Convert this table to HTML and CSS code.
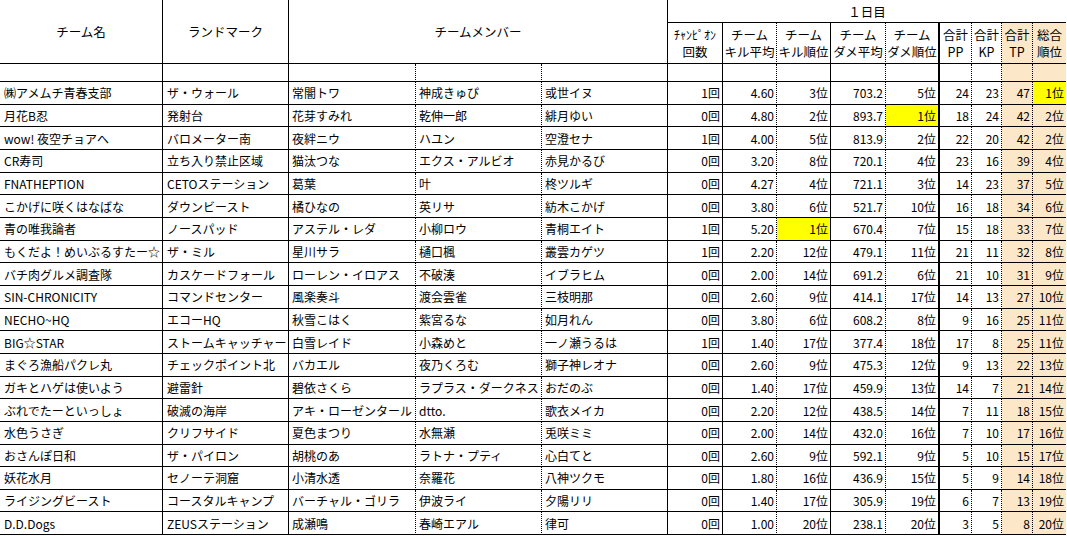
FILE: index.html
```html
<!DOCTYPE html>
<html lang="ja">
<head>
<meta charset="utf-8">
<title>1日目 結果</title>
<link rel="stylesheet" href="styles.css">
</head>
<body>
<div class="sheet">
  <div class="hd hd-team">チーム名</div>
  <div class="hd hd-land">ランドマーク</div>
  <div class="hd hd-member">チームメンバー</div>
  <div class="hd hd-day">１日目</div>

  <div class="sub">
    <div><span class="champ">ﾁｬﾝﾋﾟｵﾝ</span><span>回数</span></div>
    <div><span>チーム</span><span>キル平均</span></div>
    <div><span>チーム</span><span>キル順位</span></div>
    <div><span>チーム</span><span>ダメ平均</span></div>
    <div><span>チーム</span><span>ダメ順位</span></div>
    <div><span>合計</span><span>PP</span></div>
    <div><span>合計</span><span>KP</span></div>
    <div><span>合計</span><span>TP</span></div>
    <div><span>総合</span><span>順位</span></div>
  </div>

  <div class="row"><div></div><div></div><div></div><div></div><div></div><div></div><div></div><div></div><div></div><div></div><div></div><div></div><div></div><div></div></div>

  <div class="row"><div>㈱アメムチ青春支部</div><div>ザ・ウォール</div><div>常闇トワ</div><div>神成きゅぴ</div><div>或世イヌ</div><div>1回</div><div>4.60</div><div>3位</div><div>703.2</div><div>5位</div><div>24</div><div>23</div><div>47</div><div class="hl">1位</div></div>
  <div class="row"><div>月花B忍</div><div>発射台</div><div>花芽すみれ</div><div>乾伸一郎</div><div>緋月ゆい</div><div>0回</div><div>4.80</div><div>2位</div><div>893.7</div><div class="hl">1位</div><div>18</div><div>24</div><div>42</div><div>2位</div></div>
  <div class="row"><div>wow! 夜空チョアへ</div><div>バロメーター南</div><div>夜絆ニウ</div><div>ハユン</div><div>空澄セナ</div><div>1回</div><div>4.00</div><div>5位</div><div>813.9</div><div>2位</div><div>22</div><div>20</div><div>42</div><div>2位</div></div>
  <div class="row"><div>CR寿司</div><div>立ち入り禁止区域</div><div>猫汰つな</div><div>エクス・アルビオ</div><div>赤見かるび</div><div>0回</div><div>3.20</div><div>8位</div><div>720.1</div><div>4位</div><div>23</div><div>16</div><div>39</div><div>4位</div></div>
  <div class="row"><div>FNATHEPTION</div><div>CETOステーション</div><div>葛葉</div><div>叶</div><div>柊ツルギ</div><div>0回</div><div>4.27</div><div>4位</div><div>721.1</div><div>3位</div><div>14</div><div>23</div><div>37</div><div>5位</div></div>
  <div class="row"><div>こかげに咲くはなばな</div><div>ダウンビースト</div><div>橘ひなの</div><div>英リサ</div><div>紡木こかげ</div><div>0回</div><div>3.80</div><div>6位</div><div>521.7</div><div>10位</div><div>16</div><div>18</div><div>34</div><div>6位</div></div>
  <div class="row"><div>青の唯我論者</div><div>ノースパッド</div><div>アステル・レダ</div><div>小柳ロウ</div><div>青桐エイト</div><div>1回</div><div>5.20</div><div class="hl">1位</div><div>670.4</div><div>7位</div><div>15</div><div>18</div><div>33</div><div>7位</div></div>
  <div class="row"><div>もくだよ！めいぶるすたー☆</div><div>ザ・ミル</div><div>星川サラ</div><div>樋口楓</div><div>叢雲カゲツ</div><div>1回</div><div>2.20</div><div>12位</div><div>479.1</div><div>11位</div><div>21</div><div>11</div><div>32</div><div>8位</div></div>
  <div class="row"><div>バチ肉グルメ調査隊</div><div>カスケードフォール</div><div>ローレン・イロアス</div><div>不破湊</div><div>イブラヒム</div><div>0回</div><div>2.00</div><div>14位</div><div>691.2</div><div>6位</div><div>21</div><div>10</div><div>31</div><div>9位</div></div>
  <div class="row"><div>SIN-CHRONICITY</div><div>コマンドセンター</div><div>風楽奏斗</div><div>渡会雲雀</div><div>三枝明那</div><div>0回</div><div>2.60</div><div>9位</div><div>414.1</div><div>17位</div><div>14</div><div>13</div><div>27</div><div>10位</div></div>
  <div class="row"><div>NECHO~HQ</div><div>エコーHQ</div><div>秋雪こはく</div><div>紫宮るな</div><div>如月れん</div><div>0回</div><div>3.80</div><div>6位</div><div>608.2</div><div>8位</div><div>9</div><div>16</div><div>25</div><div>11位</div></div>
  <div class="row"><div>BIG☆STAR</div><div>ストームキャッチャー</div><div>白雪レイド</div><div>小森めと</div><div>一ノ瀬うるは</div><div>1回</div><div>1.40</div><div>17位</div><div>377.4</div><div>18位</div><div>17</div><div>8</div><div>25</div><div>11位</div></div>
  <div class="row"><div>まぐろ漁船パクレ丸</div><div>チェックポイント北</div><div>バカエル</div><div>夜乃くろむ</div><div>獅子神レオナ</div><div>0回</div><div>2.60</div><div>9位</div><div>475.3</div><div>12位</div><div>9</div><div>13</div><div>22</div><div>13位</div></div>
  <div class="row"><div>ガキとハゲは使いよう</div><div>避雷針</div><div>碧依さくら</div><div>ラプラス・ダークネス</div><div>おだのぶ</div><div>0回</div><div>1.40</div><div>17位</div><div>459.9</div><div>13位</div><div>14</div><div>7</div><div>21</div><div>14位</div></div>
  <div class="row"><div>ぶれでたーといっしょ</div><div>破滅の海岸</div><div>アキ・ローゼンタール</div><div>dtto.</div><div>歌衣メイカ</div><div>0回</div><div>2.20</div><div>12位</div><div>438.5</div><div>14位</div><div>7</div><div>11</div><div>18</div><div>15位</div></div>
  <div class="row"><div>水色うさぎ</div><div>クリフサイド</div><div>夏色まつり</div><div>水無瀬</div><div>兎咲ミミ</div><div>0回</div><div>2.00</div><div>14位</div><div>432.0</div><div>16位</div><div>7</div><div>10</div><div>17</div><div>16位</div></div>
  <div class="row"><div>おさんぽ日和</div><div>ザ・パイロン</div><div>胡桃のあ</div><div>ラトナ・プティ</div><div>心白てと</div><div>0回</div><div>2.60</div><div>9位</div><div>592.1</div><div>9位</div><div>5</div><div>10</div><div>15</div><div>17位</div></div>
  <div class="row"><div>妖花水月</div><div>セノーテ洞窟</div><div>小清水透</div><div>奈羅花</div><div>八神ツクモ</div><div>0回</div><div>1.80</div><div>16位</div><div>436.9</div><div>15位</div><div>5</div><div>9</div><div>14</div><div>18位</div></div>
  <div class="row"><div>ライジングビースト</div><div>コースタルキャンプ</div><div>バーチャル・ゴリラ</div><div>伊波ライ</div><div>夕陽リリ</div><div>0回</div><div>1.40</div><div>17位</div><div>305.9</div><div>19位</div><div>6</div><div>7</div><div>13</div><div>19位</div></div>
  <div class="row"><div>D.D.Dogs</div><div>ZEUSステーション</div><div>成瀬鳴</div><div>春崎エアル</div><div>律可</div><div>0回</div><div>1.00</div><div>20位</div><div>238.1</div><div>20位</div><div>3</div><div>5</div><div>8</div><div>20位</div></div>
</div>
</body>
</html>
```

FILE: styles.css
```css
html, body {
  margin: 0;
  padding: 0;
  background: #fff;
}

body {
  font-family: "Noto Sans CJK JP", "Noto Sans", sans-serif;
  font-size: 12px;
  color: #000;
}

.sheet {
  display: grid;
  grid-template-columns: 163px 126px 127px 126px 126px 55px 54px 54px 55px 54px 32px 30px 31px 33px;
  grid-template-rows: 23px 41px 18px repeat(20, 22.67px);
  width: 1066px;
}

.sheet div {
  box-sizing: border-box;
  min-width: 0;
  white-space: nowrap;
}

/* top headers */
.hd {
  display: flex;
  align-items: center;
  justify-content: center;
  border-bottom: 1px solid #000;
  border-right: 1px solid #000;
  font-size: 12.5px;
}

.hd-team { grid-column: 1; grid-row: 1 / 3; }
.hd-land { grid-column: 2; grid-row: 1 / 3; }
.hd-member { grid-column: 3 / 6; grid-row: 1 / 3; }
.hd-day { grid-column: 6 / 15; grid-row: 1; border-right: none; }

/* sub headers */
.sub, .row { display: contents; }

.sub > div {
  grid-row: 2;
  display: flex;
  flex-direction: column;
  align-items: center;
  justify-content: center;
  line-height: 17px;
  border-bottom: 1px solid #000;
  border-right: 1px solid #000;
  font-size: 12.5px;
}

.sub > div:nth-child(1) { grid-column: 6; }
.sub > div:nth-child(2) { grid-column: 7; border-right-style: dotted; }
.sub > div:nth-child(3) { grid-column: 8; }
.sub > div:nth-child(4) { grid-column: 9; border-right-style: dotted; }
.sub > div:nth-child(5) { grid-column: 10; border-right-width: 2px; }
.sub > div:nth-child(6) { grid-column: 11; border-right-style: dotted; }
.sub > div:nth-child(7) { grid-column: 12; border-right-style: dotted; }
.sub > div:nth-child(8) { grid-column: 13; border-right-style: dotted; background: #fce8c9; }
.sub > div:nth-child(9) { grid-column: 14; border-right: none; background: #fce8c9; }

.champ {
  font-size: 12px;
  letter-spacing: 0;
}

/* body rows */
.row > div {
  display: flex;
  align-items: center;
  padding: 0 2px 0 4px;
  border-bottom: 1px solid #000;
  border-right: 1px solid #000;
}

.row > div:nth-child(3),
.row > div:nth-child(4) {
  border-right-style: dotted;
  padding-left: 3px;
}

.row > div:nth-child(5) { padding-left: 3px; }

.row > div:nth-child(n+6) {
  justify-content: flex-end;
  padding-left: 0;
  padding-right: 2px;
}

.row > div:nth-child(7),
.row > div:nth-child(9),
.row > div:nth-child(11),
.row > div:nth-child(12),
.row > div:nth-child(13) {
  border-right-style: dotted;
}

.row > div:nth-child(10) { border-right-width: 2px; }

.row > div:nth-child(13),
.row > div:nth-child(14) {
  background: #fce8c9;
}

.row > div:nth-child(14) { border-right: none; }

.row > div.hl { background: #ffff00; }
```
